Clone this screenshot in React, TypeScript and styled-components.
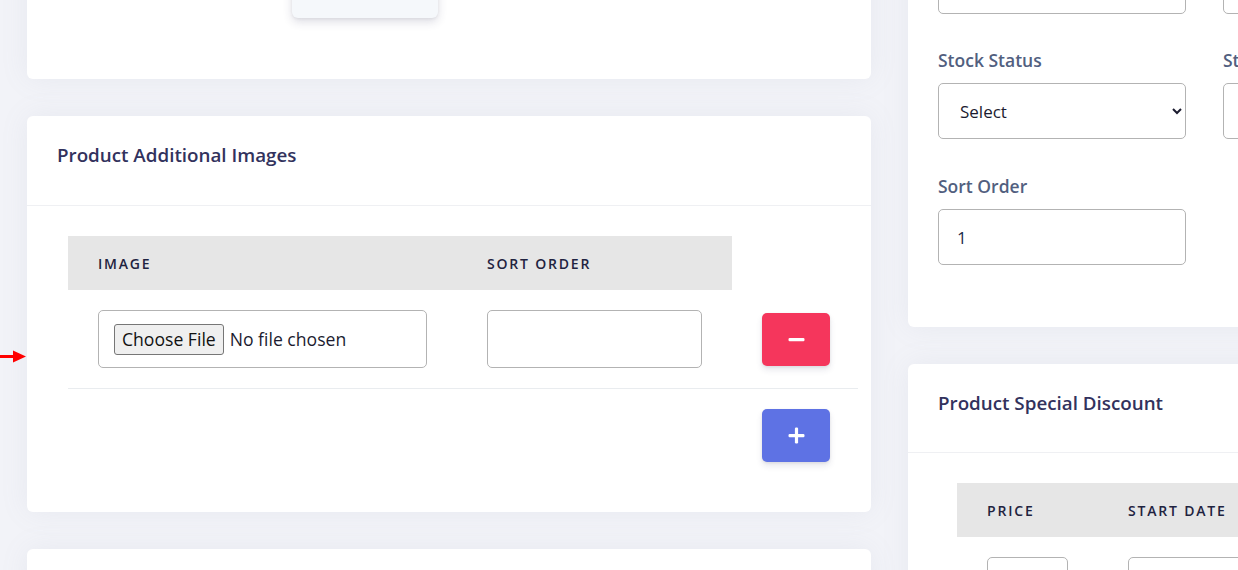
import React from "react";
import styled, { createGlobalStyle } from "styled-components";

const GlobalStyle = createGlobalStyle`
  html, body { margin: 0; padding: 0; }
  body {
    background: #f2f3f8;
    font-family: "Open Sans", "Noto Sans", sans-serif;
    overflow: hidden;
    width: 1238px;
    height: 570px;
  }
`;

const Page = styled.div`
  display: flex;
  gap: 37px;
  padding-left: 27px;
  margin-top: -107px;
  width: max-content;
`;

const Column = styled.div`
  display: flex;
  flex-direction: column;
  gap: 37px;
  width: 844px;
`;

const Card = styled.section<{ $height?: number }>`
  position: relative;
  background: #fff;
  border-radius: 6px;
  box-shadow: 0 0 28px 0 rgba(136, 152, 170, 0.1);
  ${(p) => (p.$height ? `height: ${p.$height}px;` : "")}
`;

const Popup = styled.div`
  position: absolute;
  left: 265px;
  top: 25px;
  width: 146px;
  height: 100px;
  background: #f5f8fb;
  border-radius: 6px;
  box-shadow: 0 4px 10px rgba(50, 50, 93, 0.16), 0 1px 3px rgba(0, 0, 0, 0.06);
`;

const CardHeader = styled.header<{ $h: number }>`
  box-sizing: border-box;
  padding: 26px 31px 0 30px;
  height: ${(p) => p.$h}px;
  border-bottom: 1px solid #eff0f3;
`;

const Title = styled.h3`
  margin: 0;
  font-size: 18.8px;
  line-height: 26px;
  font-weight: 600;
  color: #32325d;
`;

const CardBody = styled.div<{ $left: number; $right: number }>`
  padding: 30px ${(p) => p.$right}px 30px ${(p) => p.$left}px;
`;

const Table = styled.table<{ $width: number }>`
  width: ${(p) => p.$width}px;
  border-collapse: collapse;
  table-layout: fixed;
`;

const Th = styled.th<{ $gray?: boolean }>`
  height: 54px;
  padding: 0 30px;
  text-align: left;
  font-size: 14px;
  font-weight: 600;
  letter-spacing: 1.8px;
  text-transform: uppercase;
  color: #1f2340;
  background: ${(p) => (p.$gray ? "#e6e6e6" : "transparent")};
`;

const Td = styled.td<{ $last?: boolean; $tight?: boolean }>`
  padding: 20px ${(p) => (p.$tight ? "0" : "30px")} 20px 30px;
  vertical-align: middle;
  border-bottom: ${(p) => (p.$last ? "none" : "1px solid #e9ecef")};
`;

const FileBox = styled.label`
  box-sizing: border-box;
  display: flex;
  align-items: center;
  height: 58px;
  padding: 0 15px;
  border: 1px solid #b3b3b3;
  border-radius: 5px;
  font-size: 17.6px;
  color: #1b1b2f;
  cursor: pointer;
`;

const HiddenFile = styled.input`
  display: none;
`;

const FileButton = styled.span`
  box-sizing: border-box;
  height: 31px;
  display: inline-flex;
  align-items: center;
  padding: 0 7px;
  background: #efefef;
  border: 1px solid #767676;
  border-radius: 3px;
  color: #111;
  margin-right: 6px;
`;

const TextInput = styled.input<{ $h?: number }>`
  box-sizing: border-box;
  display: block;
  width: 100%;
  height: ${(p) => p.$h ?? 58}px;
  padding: 0 18px;
  border: 1px solid #b3b3b3;
  border-radius: 5px;
  font-family: inherit;
  font-size: 17px;
  color: #1c2b4a;
  background: #fff;
  outline: none;
`;

const Select = styled.select`
  box-sizing: border-box;
  display: block;
  width: 100%;
  height: 56px;
  padding: 0 14px 0 17px;
  border: 1px solid #b3b3b3;
  border-radius: 5px;
  font-family: inherit;
  font-size: 17px;
  color: #1b1b2f;
  background: #fff;
  outline: none;
`;

const IconButton = styled.button<{ $tone: "danger" | "primary" }>`
  width: 68px;
  height: 53px;
  border: none;
  border-radius: 5px;
  display: flex;
  align-items: center;
  justify-content: center;
  background: ${(p) => (p.$tone === "danger" ? "#f5365c" : "#5e72e4")};
  box-shadow: 0 4px 6px rgba(50, 50, 93, 0.11), 0 1px 3px rgba(0, 0, 0, 0.08);
  cursor: pointer;
`;

const FormGrid = styled.div`
  display: grid;
  grid-template-columns: 248px 248px 248px;
  column-gap: 37px;
  row-gap: 34px;
  padding: 30px 30px 62px 30px;
`;

const Field = styled.div<{ $shift?: number }>`
  display: flex;
  flex-direction: column;
  padding-top: ${(p) => p.$shift ?? 0}px;
`;

const Label = styled.label`
  font-size: 17.5px;
  font-weight: 600;
  line-height: 25px;
  color: #525f7f;
  margin-bottom: 10px;
`;

const Arrow = styled.svg`
  position: absolute;
  left: 0;
  top: 350px;
`;

const Minus = () => (
  <svg width="17" height="17" viewBox="0 0 17 17">
    <rect x="0.5" y="7" width="16" height="3.2" rx="1.2" fill="#fff" />
  </svg>
);

const Plus = () => (
  <svg width="17" height="17" viewBox="0 0 17 17">
    <rect x="0.5" y="7" width="16" height="3.2" rx="1.2" fill="#fff" />
    <rect x="6.9" y="0.5" width="3.2" height="16" rx="1.2" fill="#fff" />
  </svg>
);

export default function App() {
  return (
    <>
      <GlobalStyle />
      <Page>
        <Column>
          <Card $height={186}>
            <Popup />
          </Card>
          <Card>
            <CardHeader $h={90}>
              <Title>Product Additional Images</Title>
            </CardHeader>
            <CardBody $left={41} $right={13}>
              <Table $width={790}>
                <colgroup>
                  <col style={{ width: 389 }} />
                  <col style={{ width: 275 }} />
                  <col style={{ width: 126 }} />
                </colgroup>
                <thead>
                  <tr>
                    <Th $gray>Image</Th>
                    <Th $gray>Sort Order</Th>
                    <Th />
                  </tr>
                </thead>
                <tbody>
                  <tr>
                    <Td>
                      <FileBox>
                        <HiddenFile type="file" />
                        <FileButton>Choose File</FileButton>
                        No file chosen
                      </FileBox>
                    </Td>
                    <Td>
                      <TextInput type="text" />
                    </Td>
                    <Td $tight>
                      <IconButton $tone="danger" aria-label="Remove">
                        <Minus />
                      </IconButton>
                    </Td>
                  </tr>
                  <tr>
                    <Td $last />
                    <Td $last />
                    <Td $last $tight>
                      <IconButton $tone="primary" aria-label="Add">
                        <Plus />
                      </IconButton>
                    </Td>
                  </tr>
                </tbody>
              </Table>
            </CardBody>
          </Card>
          <Card $height={200} />
        </Column>
        <Column>
          <Card>
            <FormGrid>
              <Field>
                <Label>Quantity</Label>
                <TextInput type="text" $h={56} />
              </Field>
              <Field>
                <Label>Minimum Quantity</Label>
                <TextInput type="text" $h={56} />
              </Field>
              <Field>
                <Label>Subtract Stock</Label>
                <TextInput type="text" $h={56} />
              </Field>
              <Field>
                <Label>Stock Status</Label>
                <Select defaultValue="">
                  <option value="">Select</option>
                  <option value="in">In Stock</option>
                  <option value="out">Out Of Stock</option>
                </Select>
              </Field>
              <Field>
                <Label>Status</Label>
                <Select defaultValue="">
                  <option value="">Select</option>
                </Select>
              </Field>
              <div />
              <Field $shift={1}>
                <Label>Sort Order</Label>
                <TextInput type="text" defaultValue="1" $h={56} />
              </Field>
            </FormGrid>
          </Card>
          <Card $height={260}>
            <CardHeader $h={89}>
              <Title>Product Special Discount</Title>
            </CardHeader>
            <CardBody $left={49} $right={13}>
              <Table $width={782}>
                <colgroup>
                  <col style={{ width: 141 }} />
                  <col style={{ width: 220 }} />
                  <col style={{ width: 220 }} />
                  <col style={{ width: 201 }} />
                </colgroup>
                <thead>
                  <tr>
                    <Th $gray>Price</Th>
                    <Th $gray>Start Date</Th>
                    <Th $gray>End Date</Th>
                    <Th />
                  </tr>
                </thead>
                <tbody>
                  <tr>
                    <Td>
                      <TextInput type="text" />
                    </Td>
                    <Td>
                      <TextInput type="text" />
                    </Td>
                    <Td>
                      <TextInput type="text" />
                    </Td>
                    <Td $tight />
                  </tr>
                </tbody>
              </Table>
            </CardBody>
          </Card>
        </Column>
      </Page>
      <Arrow width="28" height="13" viewBox="0 0 28 13">
        <rect x="0" y="5" width="14" height="3" fill="#ff0000" />
        <polygon points="13,0.5 26,6.5 13,12.5" fill="#ff0000" />
      </Arrow>
    </>
  );
}
